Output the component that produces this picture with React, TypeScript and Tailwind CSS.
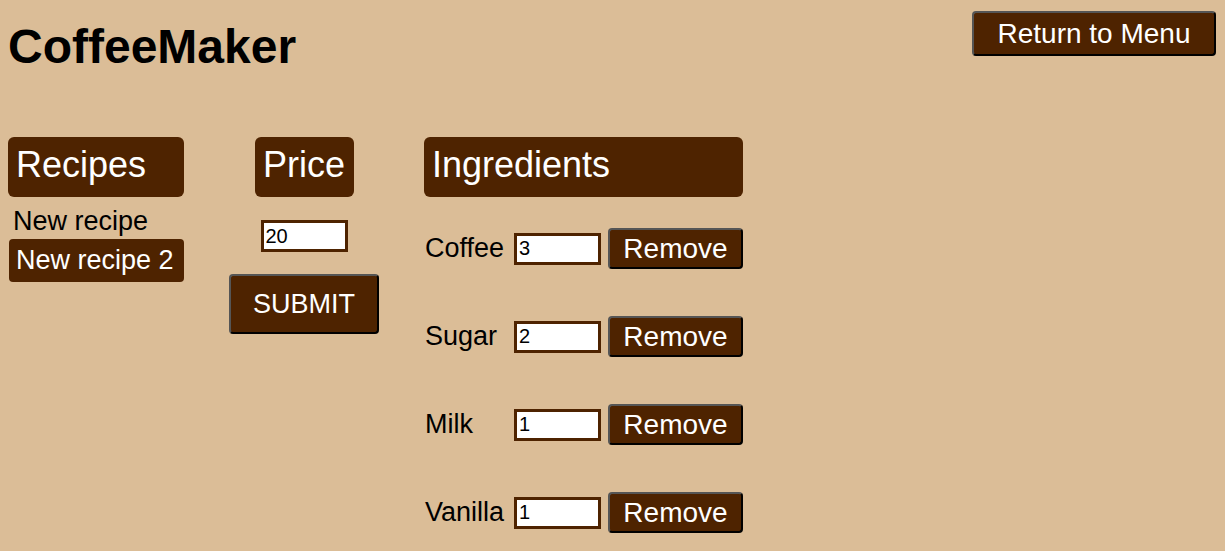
import { useState } from "react"

const btn = "bg-[#4e2300] text-white border-2 border-t-[#555] border-l-[#555] border-r-black border-b-black rounded-[4px]"

export default function App() {
    const [recipes] = useState(["New recipe", "New recipe 2"])
    const [selected, setSelected] = useState(1)
    const [price, setPrice] = useState("20")
    const [ingredients, setIngredients] = useState([
        { name: "Coffee", amount: "3" },
        { name: "Sugar", amount: "2" },
        { name: "Milk", amount: "1" },
        { name: "Vanilla", amount: "1" },
    ])

    const update = (i: number, v: string) => {
        setIngredients(ingredients.map((ing, j) => (j === i ? { ...ing, amount: v } : ing)))
    }

  return (
    <div className="min-h-screen bg-[#dbbd97] px-2 font-['Liberation_Sans',Arial,sans-serif] text-black">
        <header className="flex justify-between items-start">
            <h1 className="mt-[19px] text-[48px] leading-[55px] font-bold">CoffeeMaker</h1>
            <button className={`${btn} mt-[11px] mr-px w-[244px] h-[45px] text-[28px] leading-none`}>Return to Menu</button>
        </header>

        <main className="flex items-start gap-[45px] mt-[63px]">
            {/* recipes */}
            <section className="flex flex-col w-[176px]">
                <h2 className="h-[60px] rounded-[6px] bg-[#4e2300] text-white text-[36px] leading-[56px] px-2">Recipes</h2>
                <div className="mt-[6px] flex flex-col">
                    {recipes.map((r, i) => (
                        <button
                            key={r}
                            onClick={() => setSelected(i)}
                            className={
                                selected === i
                                    ? "text-left h-[43px] leading-[43px] text-[27px] px-[7px] ml-px rounded-[4px] bg-[#4e2300] text-white"
                                    : "text-left h-[36px] leading-[36px] text-[27px] px-[5px]"
                            }
                        >
                            {r}
                        </button>
                    ))}
                </div>
            </section>

            {/* price */}
            <section className="flex flex-col items-center w-[150px]">
                <h2 className="h-[60px] w-[99px] rounded-[6px] bg-[#4e2300] text-white text-[36px] leading-[56px] text-center">Price</h2>
                <input
                    value={price}
                    onChange={(e) => setPrice(e.target.value)}
                    className="mt-[23px] w-[87px] h-[32px] border-[3px] border-[#4e2300] bg-white px-[2px] text-[20px] outline-none"
                />
                <button className={`${btn} mt-[22px] w-[150px] h-[60px] text-[27px]`}>SUBMIT</button>
            </section>

            {/* ingredients */}
            <section className="flex flex-col w-[319px]">
                <h2 className="h-[60px] rounded-[6px] bg-[#4e2300] text-white text-[36px] leading-[56px] px-2">Ingredients</h2>
                <div className="mt-[31px] flex flex-col gap-[47px]">
                    {ingredients.map((ing, i) => (
                        <div key={ing.name} className="flex items-center h-[41px]">
                            <span className="w-[90px] pl-px text-[27px]">{ing.name}</span>
                            <input
                                value={ing.amount}
                                onChange={(e) => update(i, e.target.value)}
                                className="w-[87px] h-[32px] border-[3px] border-[#4e2300] bg-white px-[2px] text-[20px] outline-none"
                            />
                            <button
                                onClick={() => setIngredients(ingredients.filter((_, j) => j !== i))}
                                className={`${btn} ml-[7px] w-[135px] h-[41px] text-[28px] leading-none`}
                            >
                                Remove
                            </button>
                        </div>
                    ))}
                </div>
            </section>
        </main>
    </div>
  )
}
